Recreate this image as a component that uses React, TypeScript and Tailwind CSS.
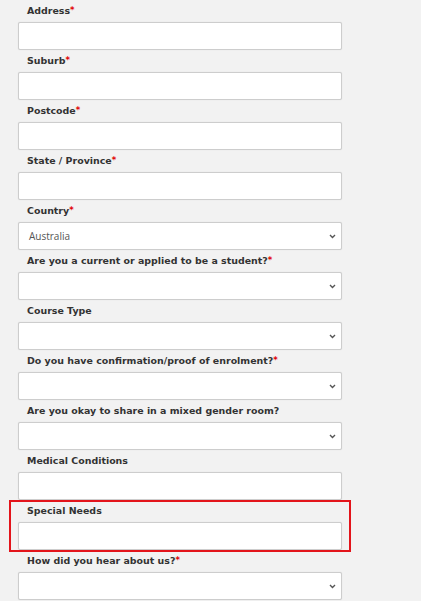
import React from 'react'

type Field = {
  label: string
  required?: boolean
  select?: boolean
  value?: string
  highlight?: boolean
}

const fields: Field[] = [
  { label: 'Address', required: true },
  { label: 'Suburb', required: true },
  { label: 'Postcode', required: true },
  { label: 'State / Province', required: true },
  { label: 'Country', required: true, select: true, value: 'Australia' },
  { label: 'Are you a current or applied to be a student?', required: true, select: true },
  { label: 'Course Type', select: true },
  { label: 'Do you have confirmation/proof of enrolment?', required: true, select: true },
  { label: 'Are you okay to share in a mixed gender room?', select: true },
  { label: 'Medical Conditions' },
  { label: 'Special Needs', highlight: true },
  { label: 'How did you hear about us?', required: true, select: true },
]

function Chevron() {
  return (
    <svg width="7" height="5" viewBox="0 0 7 5" className="text-[#555]">
      <path d="M1 1 L3.5 3.5 L6 1" fill="none" stroke="currentColor" strokeWidth="1.4" />
    </svg>
  )
}

export default function App() {
  return (
    <main className="w-[421px] h-[601px] overflow-hidden bg-[#f2f2f2]"
      style={{ fontFamily: '"DejaVu Sans", Verdana, sans-serif' }}>
      <div className="w-[324px] ml-[18px]">
        {fields.map((f) => (
          <div key={f.label} className="relative h-[50px]">
            {f.highlight && (
              <div className="absolute -left-[9px] -right-[9px] top-0 -bottom-[2px] border-2 border-[#e3141b]" />
            )}
            <div className="h-[22px] pl-[9px] flex items-center text-[9.45px] font-bold text-[#333]">
              {f.label}
              {f.required && <span className="text-[#e10000] relative -top-[1px] text-[8.5px]">*</span>}
            </div>
            <div className="h-[28px] bg-white border border-[#cdcdcd] rounded-[2px] shadow-[0_0_1px_rgba(0,0,0,0.15)] flex items-center justify-between pl-[10px] pr-[5px]">
              <span className="text-[10px] text-[#555]"
                style={{ fontFamily: '"Open Sans", "DejaVu Sans", sans-serif' }}>
                {f.value ?? ''}
              </span>
              {f.select && <Chevron />}
            </div>
          </div>
        ))}
      </div>
    </main>
  )
}
